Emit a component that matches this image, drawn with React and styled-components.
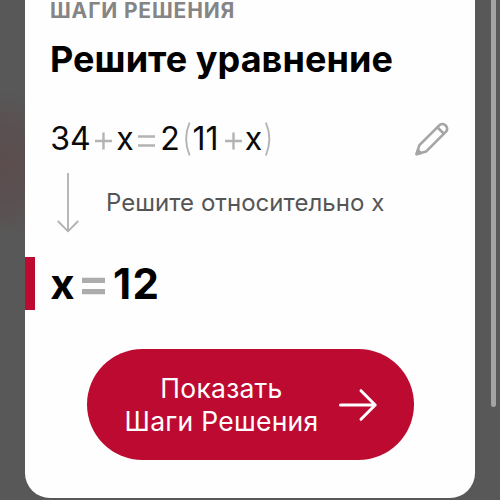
import React from 'react'
import styled, { createGlobalStyle } from 'styled-components';

const GlobalStyle = createGlobalStyle`
  body {
    margin: 0;
    overflow: hidden;
    background: #585858;
    font-family: Inter, "Liberation Sans", sans-serif;
  }
`;

const Screen = styled.div`
  position: relative;
  box-sizing: border-box;
  width: 500px;
  height: 500px;
  padding: 0 25px 3px;
  overflow: hidden;
  background:
    radial-gradient(ellipse 75px 75px at 0px 165px, #5c4d4f 0%, #5a5051 50%, rgba(88, 88, 88, 0) 100%),
    #585858;
`;

const ScrollThumb = styled.div`
  position: absolute;
  top: -10px;
  right: 4.5px;
  width: 5px;
  height: 417px;
  border-radius: 3px;
  background: #a3a3a3;
`;

const Card = styled.main`
  display: flex;
  flex-direction: column;
  height: 497.5px;
  overflow: hidden;
  border-radius: 0 0 25px 25px;
  background: #fefefe;
`;

const Caption = styled.div`
  height: 33px;
  padding-left: 25px;
  color: #858585;
  font-size: 21px;
  font-weight: 700;
  line-height: 21px;
  letter-spacing: 0.85px;
  white-space: nowrap;
`;

const Title = styled.h1`
  height: 44px;
  margin: 4px 0 0;
  padding-left: 25px;
  color: #000;
  font-size: 36px;
  font-weight: 700;
  line-height: 44px;
  letter-spacing: 0.07px;
  white-space: nowrap;
`;

const EquationRow = styled.div`
  display: flex;
  align-items: center;
  height: 46px;
  margin-top: 35px;
  padding: 0 26px 0 25px;
`;

const Equation = styled.div`
  display: flex;
  align-items: center;
  flex: 1;
  color: #0a0a0a;
  font-size: 32px;
  line-height: 46px;
`;

const Token = styled.span`
  display: flex;
  justify-content: center;
  width: ${props => props.$w}px;
  margin-right: ${props => props.$gap || 0}px;
  white-space: nowrap;
`;

const Sign = styled.svg`
  display: block;
  flex: none;
  margin-top: ${props => props.$drop || 0}px;
  fill: none;
  stroke: ${props => props.$color || '#b3b3b3'};
  stroke-width: ${props => props.$weight || 2.4};
`;

const StepRow = styled.div`
  display: flex;
  align-items: center;
  height: 64px;
  margin-top: 9px;
  padding-left: 31px;
`;

const StepText = styled.span`
  margin-left: 26px;
  color: #555;
  font-size: 24px;
  line-height: 30px;
  letter-spacing: 0.04px;
  white-space: nowrap;
`;

const ResultRow = styled.div`
  display: flex;
  align-items: center;
  box-sizing: border-box;
  height: 53px;
  margin-top: 22px;
  padding-left: 15.5px;
  border-left: 10px solid #bd0a31;
  color: #000;
  font-size: 42px;
  font-weight: 700;
  line-height: 53px;
`;

const Answer = styled.span`
  margin-left: 8px;
  letter-spacing: 1.5px;
`;

const ShowButton = styled.button`
  display: flex;
  align-items: center;
  box-sizing: border-box;
  width: 327.5px;
  height: 111px;
  margin: 39px 0 0 61.5px;
  padding: 0 0 0 38px;
  border: none;
  border-radius: 56px;
  background: #bd0a31;
  color: #fff;
  font-family: inherit;
  cursor: pointer;
`;

const ButtonText = styled.span`
  width: 194px;
  margin-right: 20px;
  font-size: 26.5px;
  line-height: 32.5px;
  letter-spacing: 0.25px;
  text-align: center;
  white-space: nowrap;
`;

function Plus() {
  return (
    <Sign width="17" height="18" viewBox="0 0 17 18" $drop={4}>
      <path d="M0 9H17M8.5 0.5V17.5" />
    </Sign>
  )
}

function Pencil() {
  return (
    <Sign width="34" height="34" viewBox="0 0 34 34" $color="#a5a5a5" $weight="2.6" strokeLinejoin="round" strokeLinecap="round">
      <path d="M1.5 32.2L4.4 23.2L24.3 3.3C28.3 -0.5 34.9 5.6 31 9.7L11 29.6Z" />
      <path d="M22.3 5.3L28.9 11.7M1.8 32L3 28.2L5.8 30.9Z" />
    </Sign>
  )
}

function App() {
  return (
    <>
      <GlobalStyle />
      <Screen>
        <Card>
          <Caption>ШАГИ РЕШЕНИЯ</Caption>
          <Title>Решите уравнение</Title>

          <EquationRow>
            <Equation>
              <Token $w={41} $gap={4}>34</Token>
              <Plus />
              <Token $w={26}>x</Token>
              <Sign width="17" height="18" viewBox="0 0 17 18" $drop={4}>
                <path d="M0 4.5H17M0 13.5H17" />
              </Sign>
              <Token $w={30}>2</Token>
              <Sign width="6" height="34" viewBox="0 0 6 34" $weight="1.9">
                <path d="M4.6 0.5C0.2 11 0.2 23 4.6 33.5" />
              </Sign>
              <Token $w={29} $gap={5}>11</Token>
              <Plus />
              <Token $w={23}>x</Token>
              <Sign width="6" height="34" viewBox="0 0 6 34" $weight="1.9">
                <path d="M0.9 0.5C5.3 11 5.3 23 0.9 33.5" />
              </Sign>
            </Equation>
            <Pencil />
          </EquationRow>

          <StepRow>
            <Sign width="24" height="62" viewBox="0 0 24 62" $color="#b0b0b0" $weight="1.8">
              <path d="M12 1V59.3M1.8 49L12 59.3L22.2 49" />
            </Sign>
            <StepText>Решите относительно x</StepText>
          </StepRow>

          <ResultRow>
            <Token $w={24} $gap={7.5}>x</Token>
            <Sign width="23" height="18" viewBox="0 0 23 18" $color="#acacac" $weight="5.4" $drop={5}>
              <path d="M0 3.4H23M0 14.6H23" />
            </Sign>
            <Answer>12</Answer>
          </ResultRow>

          <ShowButton>
            <ButtonText>Показать<br />Шаги Решения</ButtonText>
            <Sign width="39" height="34" viewBox="0 0 39 34" $color="#fff" $weight="3" strokeLinecap="round" strokeLinejoin="round">
              <path d="M1.5 17H36.2M22 2.7L36.2 17L22 31.3" />
            </Sign>
          </ShowButton>
        </Card>
        <ScrollThumb />
      </Screen>
    </>
  )
}

export default App;
